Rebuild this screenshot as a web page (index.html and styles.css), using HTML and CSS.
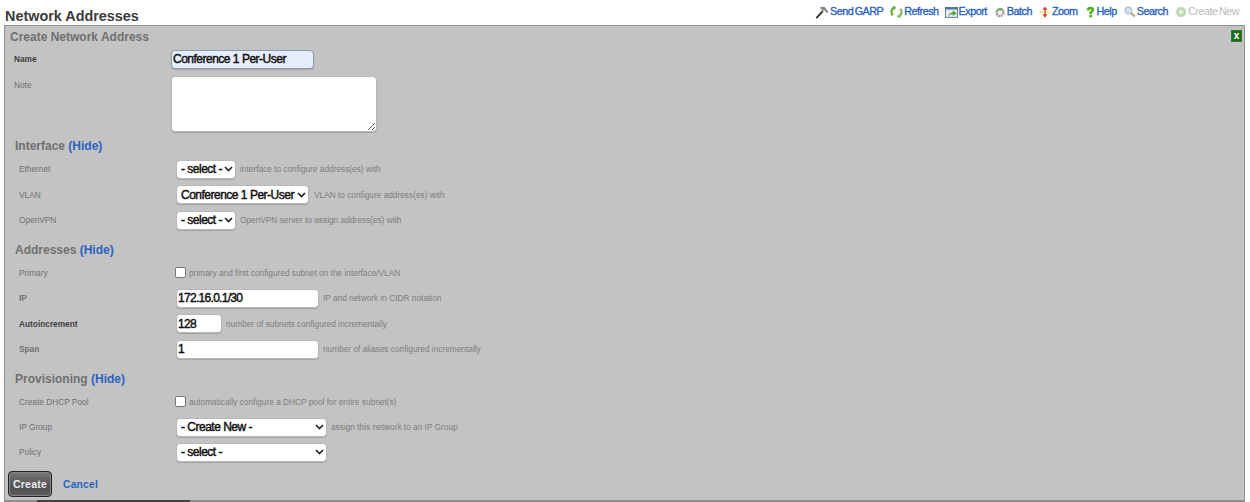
FILE: index.html
```html
<!DOCTYPE html>
<html lang="en">
<head>
<meta charset="utf-8">
<title>Network Addresses</title>
<link rel="stylesheet" href="styles.css">
</head>
<body>
<header class="top">
  <h1 class="title">Network Addresses</h1>
  <nav class="actions">
    <a class="act"><svg class="ico i-14" viewBox="0 0 16 16"><path d="M1.500 15 L9 7" stroke="#333" stroke-width="2.200" fill="none"/><path d="M5 3.500 Q9 1 12 3 L15.500 8 L13.500 9 L10.500 6 L8.500 6.500 Q7.500 4.500 5 3.500 Z" fill="#8a8a8a"/></svg>Send GARP</a>
    <a class="act"><svg class="ico" viewBox="0 0 16 16"><path d="M3.500 12 A6 6 0 0 1 5 2.500" stroke="#6fb044" stroke-width="3" fill="none"/><path d="M3 0 L8 2.500 L4.500 6 Z" fill="#6fb044"/><path d="M12.500 4 A6 6 0 0 1 11 13.500" stroke="#8cc068" stroke-width="3" fill="none"/><path d="M13 16 L8 13.500 L11.500 10 Z" fill="#8cc068"/></svg>Refresh</a>
    <a class="act act-tight"><svg class="ico" viewBox="0 0 16 16"><rect x="0.500" y="2.500" width="15" height="12" fill="#e8eef4" stroke="#3f5f80"/><rect x="0.500" y="2.500" width="15" height="2.500" fill="#4f76a0"/><path d="M4 13 Q5 8.500 9.500 8.500 L9.500 6 L14.500 9.500 L9.500 13 L9.500 10.500 Q6.500 10.500 4 13Z" fill="#4aa02c"/></svg>Export</a>
    <a class="act"><svg class="ico i-12" viewBox="0 0 16 16"><circle cx="8" cy="9" r="4.500" fill="none" stroke="#a0a0a0" stroke-width="3.500" stroke-dasharray="2.600 0.900"/><path d="M4 6 Q8 1.500 12.500 5.500" stroke="#7fae5a" stroke-width="2" fill="none"/><circle cx="8" cy="9" r="1.800" fill="#e8e8e8"/></svg>Batch</a>
    <a class="act"><svg class="ico i-12" viewBox="0 0 16 16"><path d="M1 8 H5.500 M10.500 8 H15" stroke="#ecd02c" stroke-width="1.800" stroke-dasharray="2 1"/><path d="M8 0.500 L11.500 5 H9 V11 H11.500 L8 15.500 L4.500 11 H7 V5 H4.500 Z" fill="#d8452a"/></svg>Zoom</a>
    <a class="act"><svg class="ico i-11" viewBox="0 0 16 16"><path d="M2.500 5.500 Q2.500 0.500 8 0.500 Q13.500 0.500 13.500 4.800 Q13.500 7.300 10.300 9 V11 H6.300 V7.500 Q9.500 6.500 9.500 5 Q9.500 4 8 4 Q6.500 4 6.300 6 Z" fill="#4fb01a"/><rect x="6.300" y="12.200" width="4" height="3.500" fill="#4fb01a"/></svg>Help</a>
    <a class="act"><svg class="ico i-12" viewBox="0 0 16 16"><circle cx="6" cy="6" r="4.500" fill="#cfe0f2" stroke="#a8bed4" stroke-width="1.500"/><path d="M9.500 9.500 L14.500 14" stroke="#c0a678" stroke-width="3"/></svg>Search</a>
    <a class="act off"><svg class="ico i-12" viewBox="0 0 16 16"><circle cx="8" cy="8" r="6.500" fill="#b9d8ac" stroke="#cfdcc9"/><path d="M8 4.500 V11.500 M4.500 8 H11.500" stroke="#f0f6ec" stroke-width="2.200"/></svg>Create New</a>
  </nav>
</header>
<main class="panel">
  <div class="panel-head">
    <h2 class="panel-title">Create Network Address</h2>
    <span class="close">x</span>
  </div>
  <form class="form">
    <div class="row row-name"><label class="lab strong">Name</label><input class="field focus" value="Conference 1 Per-User"></div>
    <div class="row row-note"><label class="lab">Note</label><textarea class="area"></textarea></div>

    <h3 class="sect first">Interface <a class="link">(Hide)</a></h3>
    <div class="row sub"><label class="lab">Ethernet</label><select class="pick w-short"><option>- select -</option></select><span class="hint">interface to configure address(es) with</span></div>
    <div class="row sub"><label class="lab">VLAN</label><select class="pick w-vlan"><option>Conference 1 Per-User</option></select><span class="hint">VLAN to configure address(es) with</span></div>
    <div class="row sub"><label class="lab">OpenVPN</label><select class="pick w-short"><option>- select -</option></select><span class="hint">OpenVPN server to assign address(es) with</span></div>

    <h3 class="sect">Addresses <a class="link">(Hide)</a></h3>
    <div class="row sub"><label class="lab">Primary</label><input type="checkbox" class="check"><span class="hint near">primary and first configured subnet on the interface/VLAN</span></div>
    <div class="row sub"><label class="lab strongish">IP</label><input class="field w-ip" value="172.16.0.1/30"><span class="hint">IP and network in CIDR notation</span></div>
    <div class="row sub"><label class="lab strong">Autoincrement</label><input class="field w-num" value="128"><span class="hint">number of subnets configured incrementally</span></div>
    <div class="row sub"><label class="lab strongish">Span</label><input class="field w-ip" value="1"><span class="hint">number of aliases configured incrementally</span></div>

    <h3 class="sect">Provisioning <a class="link">(Hide)</a></h3>
    <div class="row sub"><label class="lab">Create DHCP Pool</label><input type="checkbox" class="check"><span class="hint near">automatically configure a DHCP pool for entire subnet(s)</span></div>
    <div class="row sub"><label class="lab">IP Group</label><select class="pick w-sel"><option>- Create New -</option></select><span class="hint">assign this network to an IP Group</span></div>
    <div class="row sub"><label class="lab">Policy</label><select class="pick w-sel"><option>- select -</option></select></div>

    <div class="buttons"><button type="button" class="btn">Create</button><a class="link cancel">Cancel</a></div>
  </form>
  <span class="scrollbar"></span>
</main>
</body>
</html>
```
FILE: styles.css
```css
* { box-sizing: border-box; }
html, body { margin: 0; padding: 0; background: #fff; height: 502px; overflow: hidden; }
body { font-family: "Liberation Sans", Arial, sans-serif; color: #444; }
.top { display: flex; justify-content: space-between; align-items: flex-start; height: 25px; padding: 4px 11px 0 5px; }
.title { margin: 4px 0 0; font-size: 14.400px; line-height: 17px; font-weight: bold; color: #3c3c3c; }
.actions { display: flex; gap: 7px; }
.act { display: flex; align-items: center; font-size: 10.800px; line-height: 15px; color: #2a62c0; letter-spacing: -0.5px; word-spacing: -1px; -webkit-text-stroke: 0.35px #2a62c0; }
.act-tight { margin-left: -1px; }
.act.off { color: #b8bcb8; -webkit-text-stroke: 0; }
.ico { width: 13px; height: 14px; margin-right: 1px; flex: none; }
.i-14 { width: 14px; }
.i-12 { width: 12px; }
.i-11 { width: 11px; }
.panel { position: relative; margin-left: 4px; margin-right: 5px; height: 477px; background: #c3c3c3; border: 1px solid #8f8f8f; border-bottom: 2px solid #8f8f8f; }
.scrollbar { position: absolute; left: 32px; bottom: -2px; width: 153px; height: 2px; background: #444; }
.panel-head { display: flex; justify-content: space-between; align-items: flex-start; padding: 4px 2px 0 5px; height: 21px; }
.panel-title { margin: 0; font-size: 12px; line-height: 15px; font-weight: bold; color: #707070; }
.close { width: 11px; height: 12px; background: #1e6a1e; border: 1px solid #2c7d2c; color: #fff; font-size: 10px; line-height: 9px; font-weight: bold; text-align: center; }
.form { display: block; }
.row { display: flex; align-items: center; padding-left: 9px; }
.row.sub { padding-left: 14px; height: 25.400px; }
.row-name { height: 24px; margin-bottom: 5px; }
.row-note { align-items: flex-start; height: 56px; }
.lab { flex: none; width: 157px; font-size: 8.300px; color: #6f6f6f; }
.row-note .lab { padding-top: 4px; }
.strong { font-weight: bold; color: #3f3f3f; }
.strongish { font-weight: bold; color: #6f6f6f; }
.field { height: 19px; padding: 0 1px; border: 1px solid #b8b8b8; border-radius: 4px; background: #fff; font-family: "Liberation Sans", Arial, sans-serif; font-size: 12px; letter-spacing: -0.5px; -webkit-text-stroke: 0.45px #111; color: #111; outline: none; box-shadow: 0 1px 1px #a5a5a5; }
.focus { background: #e6edfb; border-color: #8d9ab5; width: 143px; }
.area { display: block; width: 206px; height: 56px; border: 1px solid #b8b8b8; border-radius: 4px; background: #fff; outline: none; margin: 0; box-shadow: 0 1px 1px #a5a5a5; }
.w-ip { width: 143px; letter-spacing: -0.7px; }
.w-num { width: 46px; letter-spacing: -0.7px; }
.pick { appearance: none; height: 19px; padding: 0 12px 0 4px; border: 1px solid #b8b8b8; border-radius: 4px; background: #fff url("data:image/svg+xml,%3Csvg xmlns='http://www.w3.org/2000/svg' width='9' height='6'%3E%3Cpath d='M1 1 L4.500 4.500 L8 1' fill='none' stroke='%23222' stroke-width='1.700'/%3E%3C/svg%3E") no-repeat right 2px center; font-family: "Liberation Sans", Arial, sans-serif; font-size: 12px; letter-spacing: -0.5px; -webkit-text-stroke: 0.45px #111; color: #111; box-shadow: 0 1px 1px #a5a5a5; }
.w-short { width: 60px; }
.w-vlan { width: 133px; }
.w-sel { width: 151px; }
.hint { margin-left: 4px; font-size: 8.300px; color: #7d7d7d; }
.w-vlan + .hint { margin-left: 5px; }
.near { margin-left: 3px; }
.check { width: 11px; height: 11px; margin: 0 0 0 -1px; appearance: none; background: #fff; border: 1px solid #777; border-radius: 2px; flex: none; }
.sect { margin: 4px 0 0; padding: 6px 0 0 10px; height: 23.300px; font-size: 12px; line-height: 15px; font-weight: bold; color: #707070; }
.sect.first { margin-top: 1.400px; }
.link { color: #2a62c0; font-weight: bold; }
.buttons { display: flex; align-items: center; gap: 11px; padding: 6px 0 0 3px; }
.btn { width: 44px; height: 26px; padding: 0; background: linear-gradient(#777, #515151 60%, #5c5c5c); border: 1px solid #222; border-radius: 4px; box-shadow: inset 0 0 1px 1px #8a8a8a; color: #eee; font-family: "Liberation Sans", Arial, sans-serif; font-size: 10.500px; font-weight: bold; letter-spacing: 0.2px; }
.cancel { font-size: 10.300px; letter-spacing: 0.2px; }
```
